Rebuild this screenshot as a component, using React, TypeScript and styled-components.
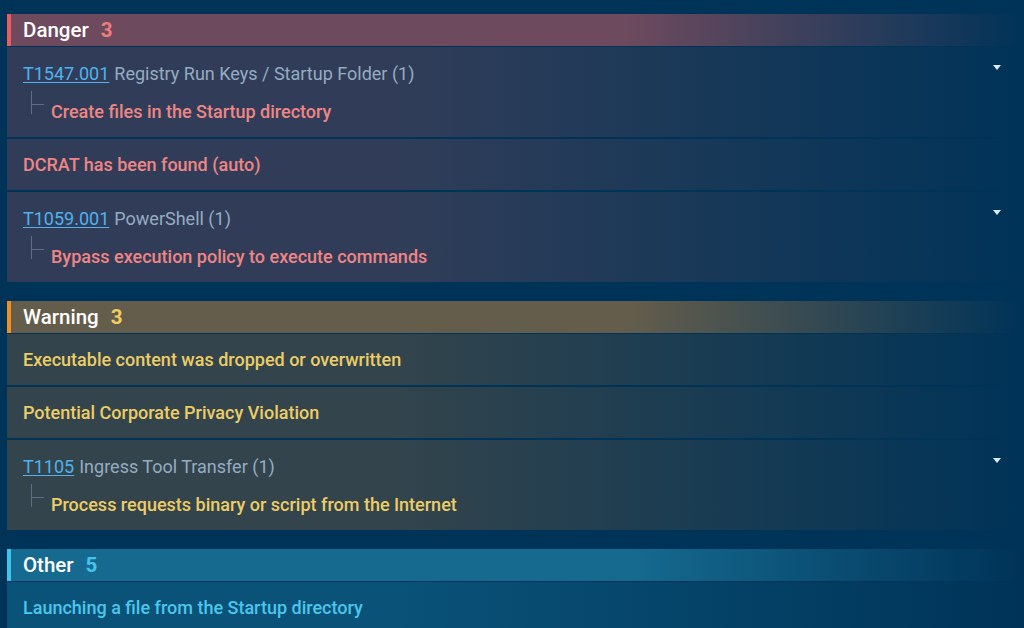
import React from "react";
import styled, { createGlobalStyle } from "styled-components";

type Level = "danger" | "warning" | "other";

const palette: Record<
  Level,
  { accent: string; head: string; row: string; count: string; text: string }
> = {
  danger: {
    accent: "#ef5b5b",
    head: "109, 74, 94",
    row: "49, 61, 88",
    count: "#f27b7b",
    text: "#ef8585",
  },
  warning: {
    accent: "#f0901e",
    head: "100, 93, 76",
    row: "51, 68, 76",
    count: "#f2cf5c",
    text: "#eccd66",
  },
  other: {
    accent: "#3cc6ee",
    head: "22, 106, 144",
    row: "10, 82, 120",
    count: "#48c4ec",
    text: "#4cc6ec",
  },
};

const GlobalStyle = createGlobalStyle`
  html, body {
    margin: 0;
    height: 100%;
    overflow: hidden;
    background: #003358;
  }
  body {
    font-family: Roboto, "Liberation Sans", sans-serif;
    -webkit-font-smoothing: antialiased;
  }
`;

const Page = styled.div`
  display: flex;
  flex-direction: column;
  gap: 19px;
  padding: 14px 3px 0 7px;
`;

const Section = styled.section`
  display: flex;
  flex-direction: column;
  gap: 2px;
`;

const Header = styled.div<{ $level: Level }>`
  display: flex;
  align-items: center;
  gap: 12px;
  height: 32px;
  margin-bottom: -1px;
  padding-left: 12px;
  border-left: 4px solid ${(p) => palette[p.$level].accent};
  background: linear-gradient(
    90deg,
    rgb(${(p) => palette[p.$level].head}) 61%,
    rgba(${(p) => palette[p.$level].head}, 0) 100%
  );
`;

const HeaderTitle = styled.span`
  color: #ffffff;
  font-size: 20.5px;
  font-weight: 500;
`;

const HeaderCount = styled.span<{ $level: Level }>`
  color: ${(p) => palette[p.$level].count};
  font-size: 20.5px;
  font-weight: 700;
`;

const Row = styled.div<{ $level: Level; $tall?: boolean }>`
  position: relative;
  display: flex;
  flex-direction: column;
  justify-content: center;
  min-height: ${(p) => (p.$tall ? 90 : 51)}px;
  box-sizing: border-box;
  padding: 1px 16px 0;
  background: linear-gradient(
    90deg,
    rgb(${(p) => palette[p.$level].row}) 38%,
    rgba(${(p) => palette[p.$level].row}, 0) 100%
  );
`;

const AlertText = styled.div<{ $level: Level }>`
  color: ${(p) => palette[p.$level].text};
  font-size: 18px;
  font-weight: 500;
  line-height: 22px;
`;

const TechLine = styled.div`
  font-size: 18px;
  line-height: 22px;
  color: #94acc2;
`;

const TechLink = styled.a`
  color: #4fb2ee;
  text-decoration: underline;
  text-underline-offset: 2px;
  margin-right: 5px;
  cursor: pointer;
`;

const SubItem = styled.div`
  display: flex;
  align-items: flex-start;
  margin-top: 16px;
  padding-left: 8px;
`;

const Branch = styled.span`
  position: relative;
  width: 19px;
  height: 23px;
  margin-top: -10px;
  flex-shrink: 0;
  border-left: 1px solid #5d6d82;

  &::after {
    content: "";
    position: absolute;
    left: 0;
    top: 13px;
    width: 12px;
    border-top: 1px solid #5d6d82;
  }
`;

const Caret = styled.span`
  position: absolute;
  right: 20px;
  top: 18px;
  width: 0;
  height: 0;
  border-left: 4px solid transparent;
  border-right: 4px solid transparent;
  border-top: 5px solid #d6ecfa;
`;

type Item =
  | { kind: "text"; text: string }
  | { kind: "tech"; id: string; name: string; count: number; detail: string };

type Group = { level: Level; title: string; items: Item[]; total: number };

const groups: Group[] = [
  {
    level: "danger",
    title: "Danger",
    total: 3,
    items: [
      {
        kind: "tech",
        id: "T1547.001",
        name: "Registry Run Keys / Startup Folder",
        count: 1,
        detail: "Create files in the Startup directory",
      },
      { kind: "text", text: "DCRAT has been found (auto)" },
      {
        kind: "tech",
        id: "T1059.001",
        name: "PowerShell",
        count: 1,
        detail: "Bypass execution policy to execute commands",
      },
    ],
  },
  {
    level: "warning",
    title: "Warning",
    total: 3,
    items: [
      { kind: "text", text: "Executable content was dropped or overwritten" },
      { kind: "text", text: "Potential Corporate Privacy Violation" },
      {
        kind: "tech",
        id: "T1105",
        name: "Ingress Tool Transfer",
        count: 1,
        detail: "Process requests binary or script from the Internet",
      },
    ],
  },
  {
    level: "other",
    title: "Other",
    total: 5,
    items: [
      { kind: "text", text: "Launching a file from the Startup directory" },
    ],
  },
];

const App: React.FC = () => (
  <>
    <GlobalStyle />
    <Page>
      {groups.map((g) => (
        <Section key={g.title}>
          <Header $level={g.level}>
            <HeaderTitle>{g.title}</HeaderTitle>
            <HeaderCount $level={g.level}>{g.total}</HeaderCount>
          </Header>
          {g.items.map((item, i) =>
            item.kind === "text" ? (
              <Row key={i} $level={g.level}>
                <AlertText $level={g.level}>{item.text}</AlertText>
              </Row>
            ) : (
              <Row key={i} $level={g.level} $tall>
                <TechLine>
                  <TechLink>{item.id}</TechLink>
                  {item.name} ({item.count})
                </TechLine>
                <SubItem>
                  <Branch />
                  <AlertText $level={g.level}>{item.detail}</AlertText>
                </SubItem>
                <Caret />
              </Row>
            )
          )}
        </Section>
      ))}
    </Page>
  </>
);

export default App;
